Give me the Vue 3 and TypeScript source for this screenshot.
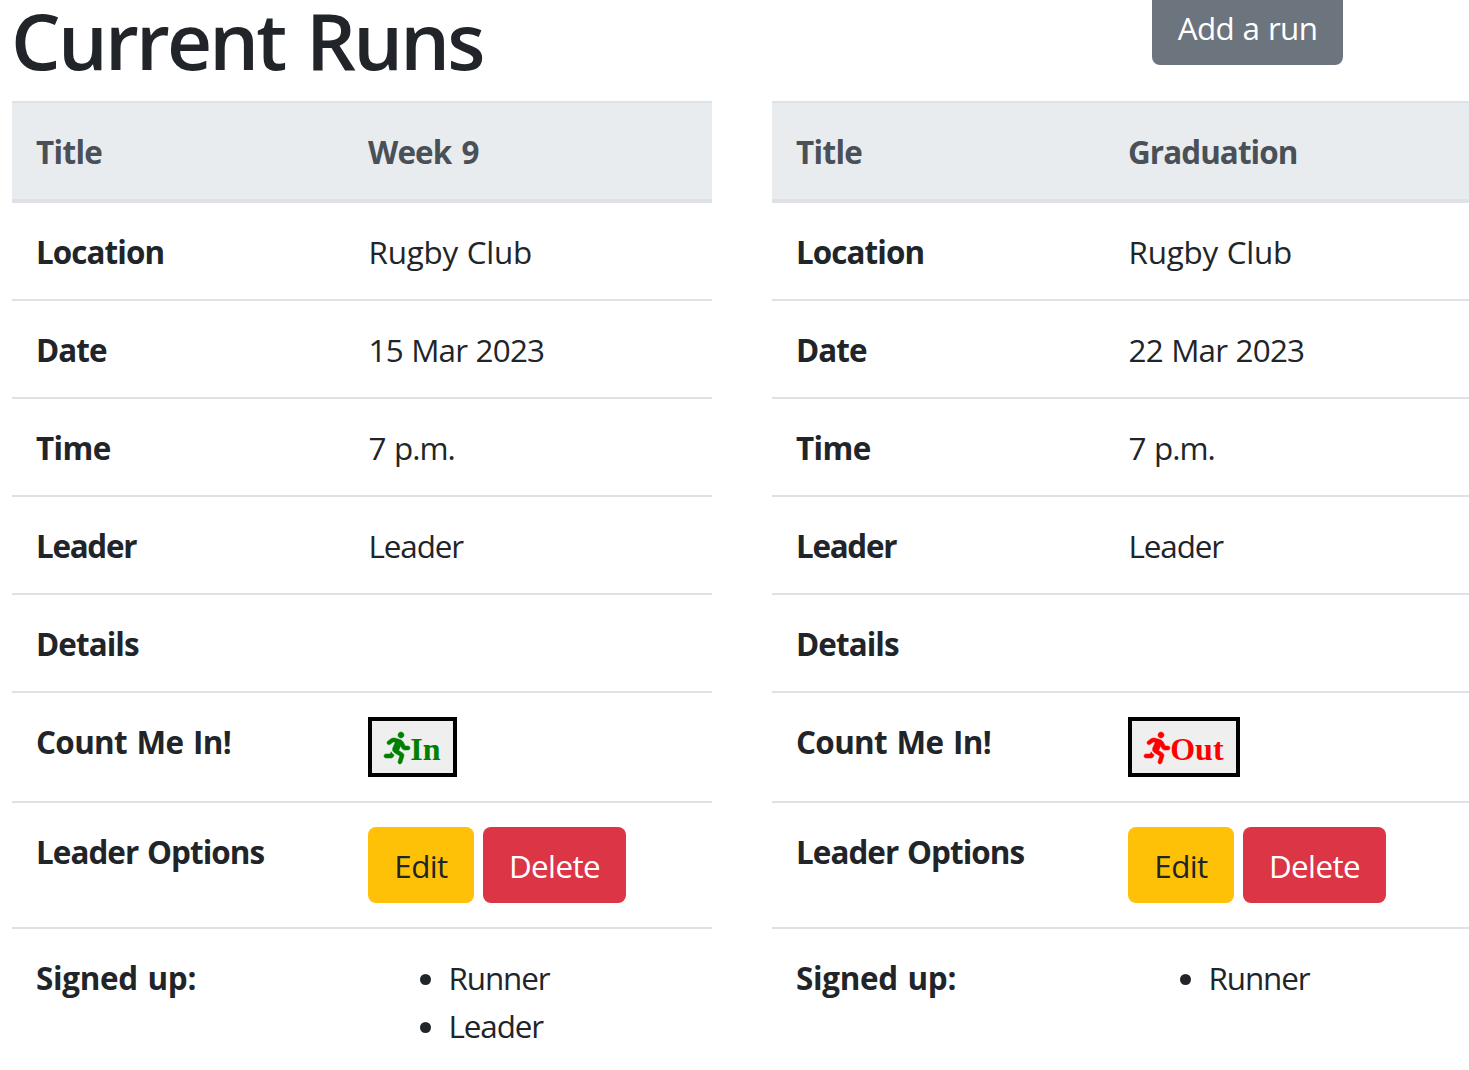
<script setup lang="ts">
interface Run {
  title: string
  location: string
  date: string
  time: string
  leader: string
  details: string
  status: 'In' | 'Out'
  signedUp: string[]
}

const runs: Run[] = [
  {
    title: 'Week 9',
    location: 'Rugby Club',
    date: '15 Mar 2023',
    time: '7 p.m.',
    leader: 'Leader',
    details: '',
    status: 'In',
    signedUp: ['Runner', 'Leader'],
  },
  {
    title: 'Graduation',
    location: 'Rugby Club',
    date: '22 Mar 2023',
    time: '7 p.m.',
    leader: 'Leader',
    details: '',
    status: 'Out',
    signedUp: ['Runner'],
  },
]
</script>

<template>
  <div class="page">
    <header class="top">
      <h1>Current Runs</h1>
      <button class="btn btn-secondary" type="button">Add a run</button>
    </header>
    <main class="runs">
      <table v-for="run in runs" :key="run.title" class="table">
        <thead>
          <tr>
            <th class="title">Title</th>
            <th>{{ run.title }}</th>
          </tr>
        </thead>
        <tbody>
          <tr>
            <th>Location</th>
            <td class="location">{{ run.location }}</td>
          </tr>
          <tr>
            <th>Date</th>
            <td class="date">{{ run.date }}</td>
          </tr>
          <tr>
            <th class="time">Time</th>
            <td class="time">{{ run.time }}</td>
          </tr>
          <tr>
            <th class="leader">Leader</th>
            <td>{{ run.leader }}</td>
          </tr>
          <tr>
            <th>Details</th>
            <td>{{ run.details }}</td>
          </tr>
          <tr>
            <th class="count">Count Me In!</th>
            <td class="controls">
              <button class="toggle" :class="run.status.toLowerCase()" type="button">
                <svg viewBox="0 0 416 512" aria-hidden="true">
                  <path
                    fill="currentColor"
                    stroke="currentColor"
                    stroke-width="8"
                    d="M272 96c26.51 0 48-21.49 48-48S298.51 0 272 0s-48 21.49-48 48 21.49 48 48 48zM113.69 317.47l-14.8 34.52H32c-17.67 0-32 14.33-32 32s14.33 32 32 32h77.45c19.25 0 36.58-11.44 44.11-29.09l8.79-20.52-10.67-6.3c-17.32-10.23-30.06-25.37-37.99-42.61zM384 223.99h-44.03l-26.06-53.25c-12.5-25.55-35.45-44.23-61.78-50.94l-71.08-21.14c-28.3-6.8-57.77-.55-80.84 17.14l-39.67 30.41c-14.03 10.75-16.69 30.83-5.94 44.86s30.84 16.69 44.86 5.94l39.69-30.41c7.67-5.89 17.44-8 25.27-6.14l14.7 4.37-37.46 87.39c-12.62 29.48-1.31 64.01 26.3 80.31l84.98 50.17-27.47 87.73c-5.28 16.86 4.11 34.82 20.97 40.09 3.19 1 6.41 1.48 9.58 1.48 13.61 0 26.23-8.77 30.52-22.45l31.64-101.06c5.91-20.77-2.89-43.08-21.64-54.39l-61.24-36.14 31.31-78.28 20.27 41.43c8 16.34 24.92 26.89 43.11 26.89H384c17.67 0 32-14.33 32-32s-14.33-31.99-32-31.99z"
                  />
                </svg>
                <span>{{ run.status }}</span>
              </button>
            </td>
          </tr>
          <tr>
            <th class="options">Leader Options</th>
            <td class="controls">
              <div class="actions">
                <button class="btn btn-warning" type="button">Edit</button>
                <button class="btn btn-danger" type="button">Delete</button>
              </div>
            </td>
          </tr>
          <tr>
            <th class="signed">Signed up:</th>
            <td>
              <ul>
                <li v-for="name in run.signedUp" :key="name">{{ name }}</li>
              </ul>
            </td>
          </tr>
        </tbody>
      </table>
    </main>
  </div>
</template>

<style>
body {
  margin: 0;
  background: #fff;
  overflow: hidden;
}
</style>

<style scoped>
.page {
  height: 1070px;
  overflow: hidden;
  color: #212529;
  font-family: 'Segoe UI', 'Open Sans', 'Noto Sans', sans-serif;
  font-size: 31.4px;
  line-height: 48px;
  letter-spacing: -0.4px;
}

.top {
  display: flex;
  justify-content: space-between;
  align-items: flex-start;
  height: 101px;
  padding: 0 126px 0 11px;
  box-sizing: border-box;
}

h1 {
  margin: 0;
  font-size: 78.4px;
  font-weight: 600;
  line-height: 80px;
  letter-spacing: -2.8px;
  word-spacing: 4px;
}

.btn {
  box-sizing: border-box;
  height: 76px;
  padding: 1px 0 0;
  border: 0;
  border-radius: 8px;
  font: inherit;
  letter-spacing: -0.6px;
  text-align: center;
}

.btn-secondary {
  width: 191px;
  margin-top: -11px;
  background: #6c757d;
  color: #fff;
  letter-spacing: -0.7px;
  word-spacing: 1.2px;
}

.btn-warning {
  width: 106px;
  background: #ffc107;
  color: #212529;
}

.btn-danger {
  width: 143px;
  background: #dc3545;
  color: #fff;
}

.actions {
  display: flex;
  gap: 9px;
}

.runs {
  display: flex;
  align-items: flex-start;
  gap: 60px;
  padding-left: 12px;
}

.table {
  flex: none;
  width: 700px;
  table-layout: fixed;
  border-spacing: 0;
}

th,
td {
  padding: 25px 24px 23px;
  border-top: 2px solid #dee2e6;
  text-align: left;
  vertical-align: top;
}

th {
  font-weight: 700;
  letter-spacing: -0.92px;
  word-spacing: 3px;
}

td {
  padding-left: 24.5px;
  letter-spacing: -1.1px;
}

th:first-child {
  width: 284px;
}

th.title,
th.time {
  letter-spacing: -0.65px;
}

th.leader {
  letter-spacing: -1.3px;
}

th.count {
  letter-spacing: -0.65px;
  word-spacing: 2px;
}

th.options {
  letter-spacing: -0.95px;
  word-spacing: 1.6px;
}

th.signed {
  letter-spacing: -0.3px;
  word-spacing: 1.8px;
}

td.location {
  letter-spacing: -0.2px;
  word-spacing: 0.7px;
}

td.date {
  letter-spacing: -0.8px;
  word-spacing: 1px;
}

td.time {
  letter-spacing: -1px;
  word-spacing: 1.5px;
}

thead th {
  border-bottom: 4px solid #dee2e6;
  background: #e9ecef;
  color: #495057;
}

tbody tr:first-child > * {
  border-top: 0;
}

td.controls {
  padding: 24px;
}

.toggle {
  display: flex;
  align-items: center;
  box-sizing: border-box;
  height: 60px;
  padding: 0 12.6px 0 12.2px;
  border: 4px solid #000;
  background: #efefef;
  font: 700 32px/36px 'Liberation Serif', 'Times New Roman', serif;
  letter-spacing: 0;
}

.toggle svg {
  width: 26px;
  height: 32px;
  padding-top: 1px;
  overflow: visible;
}

.toggle span {
  padding-top: 4px;
}

.toggle.in {
  color: #008000;
}

.toggle.out {
  color: #f00;
}

ul {
  margin: 0;
  padding-left: 80px;
}
</style>
